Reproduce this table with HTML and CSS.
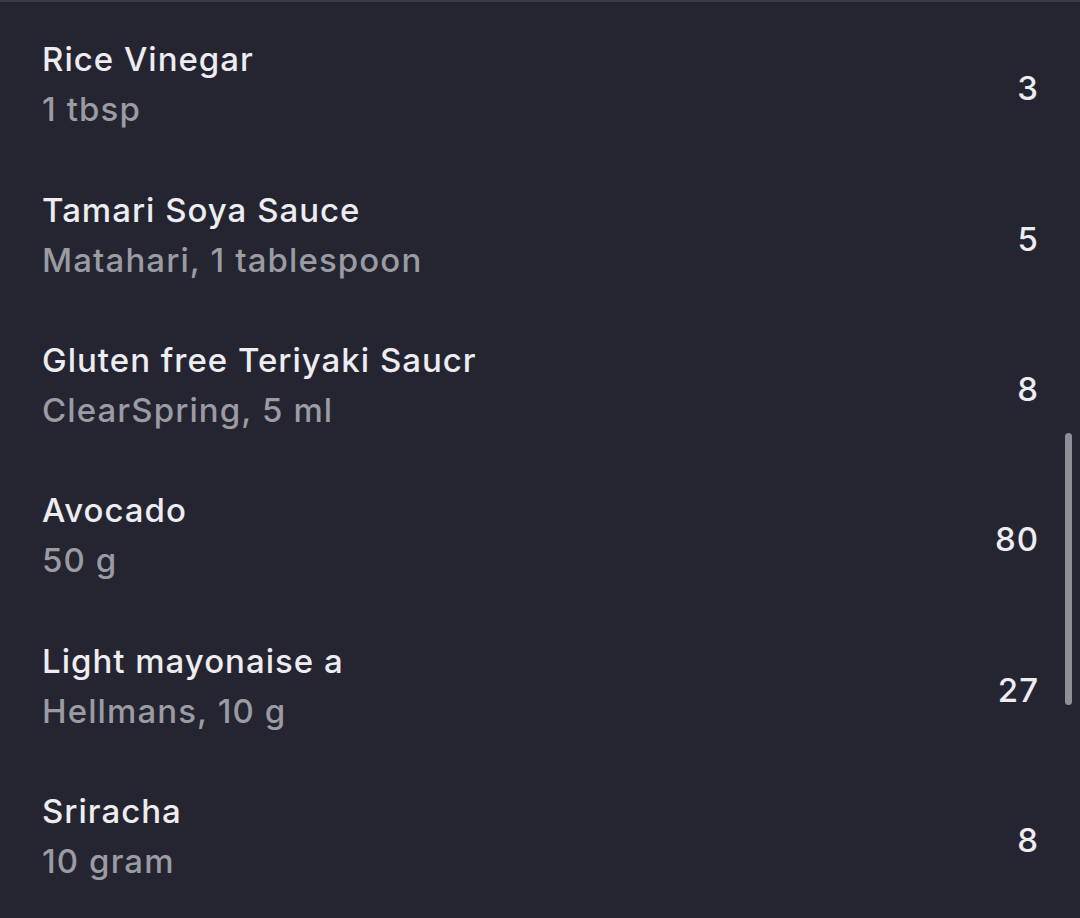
FILE: index.html
```html
<!DOCTYPE html>
<html>
<head>
<meta charset="utf-8">
<link rel="stylesheet" href="styles.css">
</head>
<body>
<div class="screen">
  <ul class="list">
    <li class="row"><div class="info"><div class="name">Rice Vinegar</div><div class="detail">1 tbsp</div></div><div class="value">3</div></li>
    <li class="row"><div class="info"><div class="name">Tamari Soya Sauce</div><div class="detail">Matahari, 1 tablespoon</div></div><div class="value">5</div></li>
    <li class="row"><div class="info"><div class="name">Gluten free Teriyaki Saucr</div><div class="detail">ClearSpring, 5 ml</div></div><div class="value">8</div></li>
    <li class="row"><div class="info"><div class="name">Avocado</div><div class="detail">50 g</div></div><div class="value">80</div></li>
    <li class="row"><div class="info"><div class="name">Light mayonaise a</div><div class="detail">Hellmans, 10 g</div></div><div class="value">27</div></li>
    <li class="row"><div class="info"><div class="name">Sriracha</div><div class="detail">10 gram</div></div><div class="value">8</div></li>
  </ul>
  <div class="scrollbar"></div>
</div>
</body>
</html>
```
FILE: styles.css
```css
html, body {
  margin: 0;
  padding: 0;
  background: #242530;
}
body {
  font-family: Inter, "Noto Sans", sans-serif;
  -webkit-font-smoothing: antialiased;
}
.screen {
  position: relative;
  width: 1080px;
  height: 918px;
  box-sizing: border-box;
  border-top: 2px solid #3a3b45;
  overflow: hidden;
}
.list {
  list-style: none;
  margin: 0;
  padding: 7px 41px 0 42px;
}
.row {
  display: flex;
  align-items: center;
  justify-content: space-between;
  height: 150.4px;
}
.info {
  display: flex;
  flex-direction: column;
}
.name {
  font-size: 33px;
  line-height: 50px;
  font-weight: 500;
  color: #ececf1;
  letter-spacing: 1px;
}
.detail {
  font-size: 33px;
  line-height: 50px;
  font-weight: 500;
  color: #9a9ba3;
  letter-spacing: 1.1px;
}
.value {
  font-size: 33px;
  font-weight: 500;
  color: #ececf1;
  letter-spacing: 1px;
  padding-top: 8px;
}
.scrollbar {
  position: absolute;
  left: 1065px;
  top: 431px;
  width: 7px;
  height: 272px;
  border-radius: 4px;
  background: #8e8f97;
}
```
